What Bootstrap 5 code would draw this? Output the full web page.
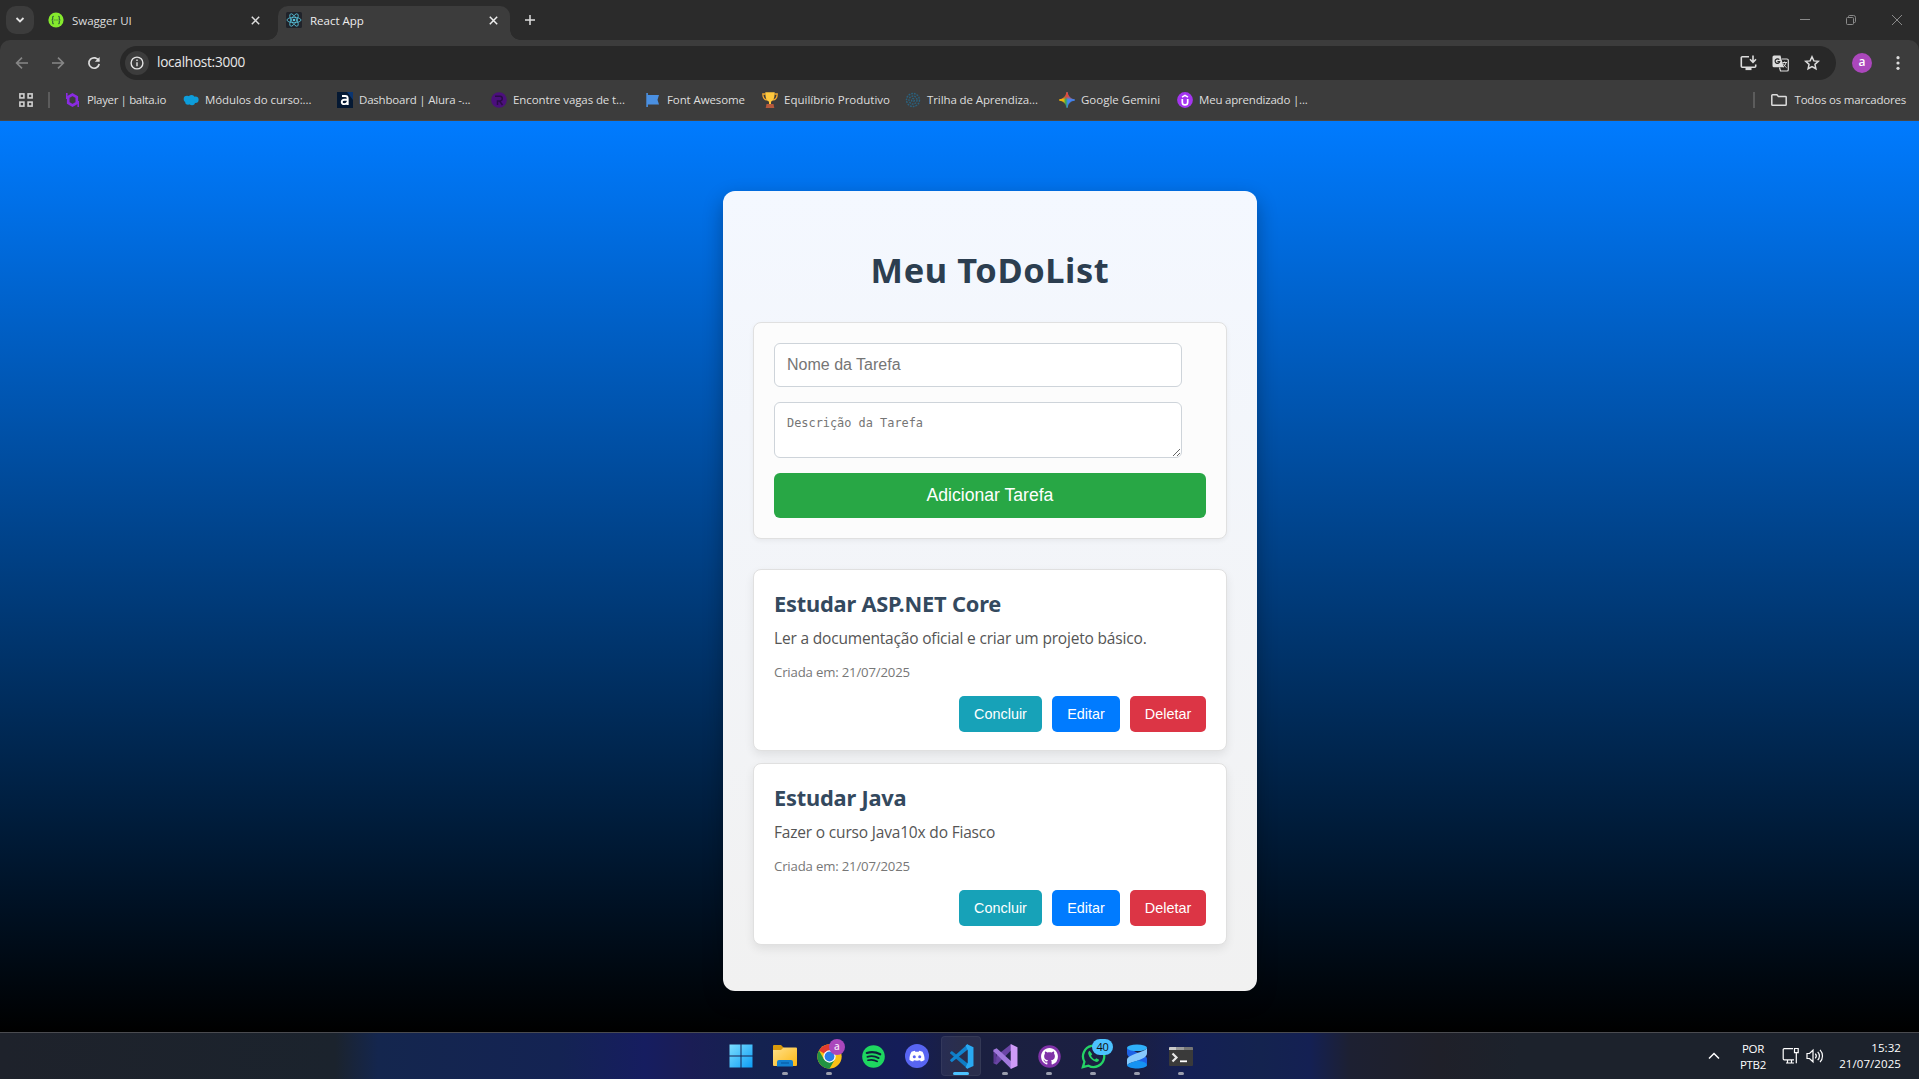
<!DOCTYPE html>
<html lang="pt-br">
<head>
<meta charset="utf-8">
<title>React App</title>
<link href="https://cdn.jsdelivr.net/npm/bootstrap@5.3.0/dist/css/bootstrap.min.css" rel="stylesheet">
<style>
body{font-family:"Open Sans",sans-serif;width:1919px;height:1079px;overflow:hidden;background:#000}
svg{display:block;flex:none}
.ui-text{font-size:11.5px;line-height:16px;white-space:nowrap;color:#dedede}
/* browser chrome */
.tabstrip{height:40px;background:#2b2b2b;padding-left:6px}
.tab-search{width:28px;height:28px;margin-top:6px;border-radius:10px;background:#3c3c3c}
.tab-item{height:34px;margin-top:6px;padding-bottom:6px}
.tab-item .ui-text{padding-top:1px}
.tab-idle{width:244px;padding-left:14px;padding-right:14px}
.tab-active{width:232px;background:#3c3c3c;border-radius:10px 10px 0 0;padding:0 8px 6px 8px;position:relative}
.tab-active .ui-text{color:#eee}
.tab-active::before,.tab-active::after{content:"";position:absolute;bottom:0;width:10px;height:10px}
.tab-active::before{left:-10px;background:radial-gradient(circle at 0 0,#2b2b2b 9.5px,#3c3c3c 10px)}
.tab-active::after{right:-10px;background:radial-gradient(circle at 100% 0,#2b2b2b 9.5px,#3c3c3c 10px)}
.tab-new{padding-left:15px}
.win-ctl{gap:36px;padding-right:17px}
.tool-wrap{background:#2b2b2b}
.toolbar{height:44px;background:#3c3c3c;border-radius:10px 10px 0 0;padding:2px 12px 0 13px}
.nav-ic{width:18px;margin-right:18px}
.omnibox{width:1716px;height:34px;border-radius:17px;background:#282828;padding:0 16px 0 5px;margin-left:-1px}
.info-dot{width:24px;height:24px;border-radius:50%;background:#3c3c3c;margin-right:8px}
.url{font-size:13.6px;letter-spacing:-.26px;color:#e8e8e8;padding-bottom:1px}
.omni-ic{gap:15px}
.avatar{width:20px;height:20px;border-radius:50%;background:#ab47bc;color:#fff;font-size:12px;line-height:18px;font-weight:600;margin-left:16px}
.bookmarks{height:37px;background:#3c3c3c;border-bottom:1px solid #4a4744;padding:0 13px 5px 19px}
.bm-sep{width:2px;height:16px;background:#5c5c5c}
.bm-sep-l{margin:0 15px}
.bm{width:154px;letter-spacing:-.1px}
.bm svg{margin-right:6px}
.bm-117{width:117px}.bm-118{width:118px}.bm-143{width:143px}
.ls-0{letter-spacing:0}.ls-2{letter-spacing:-.2px}.ls-3{letter-spacing:-.36px}
.folder-ic{margin:0 8px 0 16px}
/* page */
.page{height:911px;background:linear-gradient(#007bff,#000);padding:70px 0 0 723px}
.todo-app{width:534px;height:800px;border-radius:12px;background:linear-gradient(#f4f8ff,#f1f1f1);box-shadow:0 8px 20px rgba(0,0,0,.3);padding:55px 30px 0}
.todo-app h1{font-family:"Noto Sans","Open Sans",sans-serif;font-size:34.4px;line-height:48px;font-weight:700;color:#2c3e50;letter-spacing:.6px;margin:0 0 28px}
.form-box{height:217px;background:#fcfcfc;border:1px solid #e0e0e0;border-radius:8px;padding:20px;box-shadow:0 2px 5px rgba(0,0,0,.05);margin-bottom:30px}
.form-box .form-control{width:408px;border:1px solid #ced4da;border-radius:6px;padding:10px 12px;font-family:"Liberation Sans",sans-serif;font-size:16px;line-height:22px;color:#222}
.form-box .form-control::placeholder{color:#757575;opacity:1}
.form-box input.form-control{height:44px;margin-bottom:15px}
.form-box textarea.form-control{height:56px;min-height:0;font-family:"DejaVu Sans Mono",monospace;font-size:11.900px;line-height:18px;margin-bottom:15px;padding:11px 12px}
.todo-app .btn{font-family:"Liberation Sans",sans-serif;border:0;color:#fff;border-radius:5px;padding:1px 0 0;font-size:14.4px;height:36px}
.form-box .btn{height:45px;border-radius:6px;padding:0;font-size:17.6px;background:#28a745}
.task{height:182px;background:#fff;border:1px solid #e0e0e0;border-radius:8px;padding:19px 20px 0;box-shadow:0 4px 10px rgba(0,0,0,.08);margin-bottom:12px}
.task h3{font-family:"Noto Sans","Open Sans",sans-serif;font-size:21.8px;line-height:30px;font-weight:700;color:#34495e;letter-spacing:-.2px;margin:0}
.task-desc{font-size:15.5px;line-height:24px;letter-spacing:-.18px;color:#555;margin:7px 0 0}
.task-date{font-size:13.2px;line-height:20px;letter-spacing:-.18px;color:#777;margin:12px 0 14px}
.acts{gap:10px}
.todo-app .b-done{background:#17a2b8;width:83px}.todo-app .b-edit{background:#007bff;width:68px}.todo-app .b-del{background:#dc3545;width:76px}
/* taskbar */
.taskbar{height:47px;border-top:1px solid #4a4b50;background:linear-gradient(90deg,#1e222b 0,#1b232d 335px,#14264e 378px,#142353 560px,#161d60 645px,#1a1d55 690px,#142250 760px,#141d58 900px,#1b2040 960px,#1b1f42 1130px,#142055 1190px,#14234f 1260px,#142053 1310px,#1d2032 1350px,#1f2029 1440px,#1c222c 1520px,#1c222c)}
.apps{padding-left:719px}
.app-cell{width:44px;height:46px;position:relative}
.app-cell::after{content:"";position:absolute;left:19px;bottom:4px;width:6px;height:3px;border-radius:2px;background:#9a9dad}
.app-cell.off::after{display:none}
.app-cell.cur::before{content:"";position:absolute;inset:3px 2px;border-radius:4px;background:#fff1;border:1px solid #ffffff0d}
.app-cell.cur::after{left:14px;width:16px;background:#4cc2ff}
.app-cell svg{position:relative}
.dot-badge{position:absolute;z-index:2;left:22px;top:6px;width:16px;height:16px;border-radius:50%;background:#ab47bc;color:#f3dff6;font-size:10px;line-height:14px;text-align:center;font-weight:600}
.num-badge{position:absolute;z-index:2;left:21px;top:6px;width:21px;height:16px;border-radius:8px;background:#4cc2ff;color:#111;font-size:11px;line-height:16px;text-align:center;letter-spacing:-.3px}
.tray{padding-right:18px}
.tray .ui-text{color:#fff}
.lang{margin-left:19px;width:28px;letter-spacing:-.3px;padding-top:1px}
.net-ic{margin-left:15px}.vol-ic{margin-left:7px}
.clock{margin-left:13px;width:64px;letter-spacing:.08px}
</style>
<script src="https://cdn.jsdelivr.net/npm/bootstrap@5.3.0/dist/js/bootstrap.bundle.min.js"></script>
</head>
<body>
<header>
  <div class="tabstrip d-flex">
    <div class="tab-search d-flex align-items-center justify-content-center">
      <svg width="10" height="10" viewBox="0 0 10 10" fill="none" stroke="#e3e3e3" stroke-width="1.8"><path d="M1.5 3 5 6.5 8.500 3"/></svg>
    </div>
    <div class="tab-item tab-idle d-flex align-items-center">
      <svg class="me-2" width="16" height="16" viewBox="0 0 16 16"><circle cx="8" cy="8" r="7.600" fill="#85ea2d"/><path d="M5.800 4.300c-1.600 0-1 1.400-1.100 2.400-.1.800-.5 1.300-1.100 1.300.6 0 1 .5 1.100 1.300.1 1-.5 2.400 1.100 2.400M10.200 4.300c1.600 0 1 1.400 1.100 2.400.1.800.5 1.300 1.100 1.300-.6 0-1 .5-1.100 1.300-.1 1 .5 2.400-1.100 2.400" fill="none" stroke="#2f5d3a" stroke-width="1.100"/><path d="M5.700 8h.9M7.600 8h.9M9.500 8h.9" stroke="#2f5d3a" stroke-width="1.100"/></svg>
      <span class="ui-text flex-grow-1">Swagger UI</span>
      <svg class="me-1" width="9" height="9" viewBox="0 0 9 9" stroke="#dedede" stroke-width="1.500"><path d="m.8.800 7.400 7.400M8.200.800.8 8.200"/></svg>
    </div>
    <div class="tab-item tab-active d-flex align-items-center">
      <svg width="16" height="16" viewBox="0 0 16 16"><rect width="16" height="16" rx="1.500" fill="#20232a"/><g fill="none" stroke="#58c4dc" stroke-width=".8"><ellipse cx="8" cy="8" rx="7" ry="2.700"/><ellipse cx="8" cy="8" rx="7" ry="2.700" transform="rotate(60 8 8)"/><ellipse cx="8" cy="8" rx="7" ry="2.700" transform="rotate(120 8 8)"/></g><circle cx="8" cy="8" r="1.300" fill="#58c4dc"/></svg>
      <span class="ui-text flex-grow-1 ms-2">React App</span>
      <svg class="me-1" width="9" height="9" viewBox="0 0 9 9" stroke="#eee" stroke-width="1.500"><path d="m.8.800 7.400 7.400M8.200.800.8 8.200"/></svg>
    </div>
    <div class="tab-item tab-new d-flex align-items-center">
      <svg width="10" height="10" viewBox="0 0 10 10" stroke="#dedede" stroke-width="1.500"><path d="M5 0v10M0 5h10"/></svg>
    </div>
    <div class="win-ctl d-flex align-items-center ms-auto">
      <svg width="10" height="10" stroke="#8a8a8a"><path d="M0 4.500h10"/></svg>
      <svg width="10" height="10" viewBox="0 0 10 10" fill="none" stroke="#8a8a8a"><rect x=".5" y="2.500" width="7" height="7" rx="1"/><path d="M2.500 2V1.500a1 1 0 0 1 1-1h4a2 2 0 0 1 2 2v4a1 1 0 0 1-1 1H8"/></svg>
      <svg width="10" height="10" viewBox="0 0 10 10" stroke="#8a8a8a"><path d="m0 0 10 10M10 0 0 10"/></svg>
    </div>
  </div>
  <div class="tool-wrap">
    <div class="toolbar d-flex align-items-center">
      <svg class="nav-ic" height="16" viewBox="0 0 18 16" fill="none" stroke="#868686" stroke-width="1.600"><path d="M15 8H4M9 2.600 3.600 8 9 13.400"/></svg>
      <svg class="nav-ic" height="16" viewBox="0 0 18 16" fill="none" stroke="#868686" stroke-width="1.600"><path d="M3 8h11M9 2.600 14.400 8 9 13.400"/></svg>
      <svg class="nav-ic" height="16" viewBox="0 0 18 16" fill="none" stroke="#dcdcdc" stroke-width="1.700"><path d="M13.800 5.800A5.200 5.200 0 1 0 14.200 9"/><path d="M14.600 2v4.800H9.800z" fill="#dcdcdc" stroke="none"/></svg>
      <div class="omnibox d-flex align-items-center">
        <div class="info-dot d-flex align-items-center justify-content-center">
          <svg width="14" height="14" viewBox="0 0 14 14" fill="none" stroke="#e3e3e3" stroke-width="1.400"><circle cx="7" cy="7" r="5.900"/><path d="M7 6.200v4M7 3.600v1.500"/></svg>
        </div>
        <span class="url">localhost:3000</span>
        <div class="omni-ic d-flex align-items-center ms-auto">
          <svg width="17" height="16" viewBox="0 0 17 16" fill="none" stroke="#dcdcdc" stroke-width="1.600"><path d="M9 1.800H2.300a1 1 0 0 0-1 1v8.400a1 1 0 0 0 1 1h12.400a1 1 0 0 0 1-1V9.500"/><path d="M5.500 14h6" stroke-width="2.200"/><path d="M13 .5v6.300M10 4.300l3 3 3-3"/></svg>
          <svg width="17" height="17" viewBox="0 0 17 17"><path d="M2 .5h6.500l3.200 11.700H2a1.500 1.500 0 0 1-1.500-1.500V2A1.500 1.500 0 0 1 2 .5z" fill="#dcdcdc"/><path d="M10 4h5a1.300 1.300 0 0 1 1.300 1.300v9.400A1.300 1.300 0 0 1 15 16H8.500l-1-3.500" fill="none" stroke="#dcdcdc" stroke-width="1.200"/><path d="M7.300 4.700A2.300 2.300 0 1 0 7.700 6.700H5.400" fill="none" stroke="#282828" stroke-width="1.200"/><path d="M10.500 7.500h4.500M12.600 6.500v1M14 7.500c-.4 2-1.500 3.500-3 4.700M11.300 8.500c.6 1.700 1.700 3 3.300 4.200" fill="none" stroke="#dcdcdc"/></svg>
          <svg width="16" height="16" viewBox="0 0 16 16" fill="none" stroke="#dcdcdc" stroke-width="1.500"><path d="m8 1.800 1.850 4.100 4.450.45-3.350 3 .95 4.400L8 11.500l-3.900 2.250.95-4.400-3.350-3 4.450-.45z"/></svg>
        </div>
      </div>
      <div class="avatar text-center">a</div>
      <svg class="ms-auto" width="18" height="16" fill="#dcdcdc"><circle cx="9" cy="2.700" r="1.600"/><circle cx="9" cy="8" r="1.600"/><circle cx="9" cy="13.300" r="1.600"/></svg>
    </div>
  </div>
  <nav class="bookmarks d-flex align-items-center">
    <svg width="14" height="14" fill="none" stroke="#d0d0d0" stroke-width="1.600"><rect x=".9" y=".9" width="4" height="4"/><rect x="9.100" y=".9" width="4" height="4"/><rect x=".9" y="9.100" width="4" height="4"/><rect x="9.100" y="9.100" width="4" height="4"/></svg>
    <div class="bm-sep bm-sep-l"></div>
    <div class="ui-text bm bm-118 ls-3 d-flex"><svg width="16" height="16" viewBox="0 0 16 16" fill="none"><path d="M7.500 2.600 11.800 5v6l-4.300 2.400L3.200 11V5z" stroke="#8a2be2" stroke-width="2.600"/><path d="M1.800 1v6M13.200 9v6" stroke="#8a2be2" stroke-width="1.600"/></svg>Player | balta.io</div>
    <div class="ui-text bm d-flex"><svg width="16" height="16" viewBox="0 0 16 16"><g fill="#0d9ddb"><circle cx="4" cy="7" r="3.300"/><circle cx="8.500" cy="6" r="3"/><circle cx="12.300" cy="7.800" r="3.300"/><circle cx="5" cy="10" r="2.800"/><circle cx="9" cy="10.300" r="3"/></g></svg>Módulos do curso:...</div>
    <div class="ui-text bm ls-2 d-flex"><svg width="16" height="16" viewBox="0 0 16 16"><rect width="16" height="16" fill="#051933"/><path d="M10 0h6v8z" fill="#0b3570"/><path d="M5 4h3.300c1.600 0 2.400.8 2.400 2.400V13M10.500 7.800H7.300c-3.400 0-3.400 4.300 0 4.300 1.900 0 3.100-.9 3.200-2.300" fill="none" stroke="#fff" stroke-width="1.900"/></svg>Dashboard | Alura -...</div>
    <div class="ui-text bm d-flex"><svg width="16" height="16" viewBox="0 0 16 16"><circle cx="8" cy="8" r="7.800" fill="#4b0f7c"/><path d="M4 4.300h5a2.300 2.300 0 0 1 0 4.600H6.500V13M8.500 9l3 4" fill="none" stroke="#2a0b48" stroke-width="1.500"/></svg>Encontre vagas de t...</div>
    <div class="ui-text bm bm-117 d-flex"><svg width="16" height="16" viewBox="0 0 16 16" fill="#4a90e2"><path d="M1.300 1h1.600v14H1.300z"/><path d="M2 3h12l-1.500 4.700 1.500 4.800H2z"/></svg>Font Awesome</div>
    <div class="ui-text bm bm-143 ls-0 d-flex"><svg width="16" height="16" viewBox="0 0 16 16"><path d="M3.500 2H.8c0 4 1.500 5.500 4 6M12.500 2h2.700c0 4-1.500 5.500-4 6" fill="none" stroke="#f3a72f" stroke-width="1.300"/><path d="M3.300.3h9.400c0 5-1 8.700-3.700 9.300V12H7V9.600C4.300 9 3.300 5.300 3.300.3z" fill="#ffc83d"/><path d="M4.500 12h7l.8 4H3.700z" fill="#b5593c"/></svg>Equilíbrio Produtivo</div>
    <div class="ui-text bm d-flex"><svg width="16" height="16" viewBox="0 0 16 16" fill="none" stroke="#2a627f" stroke-width="1.400" stroke-dasharray="1.800 1"><circle cx="8" cy="8" r="6.500"/><circle cx="8" cy="8" r="4"/><circle cx="8" cy="8" r="1.500"/></svg>Trilha de Aprendiza...</div>
    <div class="ui-text bm bm-118 ls-0 d-flex"><svg width="16" height="16" viewBox="0 0 16 16"><defs><linearGradient id="gm" x1="0" y1=".5" x2="1" y2=".5"><stop offset="0" stop-color="#fbbc04"/><stop offset=".25" stop-color="#fbbc04"/><stop offset=".42" stop-color="#34a853"/><stop offset=".56" stop-color="#4285f4"/><stop offset="1" stop-color="#4285f4"/></linearGradient><linearGradient id="gm2" x1="0" y1="0" x2="0" y2="1"><stop offset=".25" stop-color="#ea4335"/><stop offset=".48" stop-color="#ea4335" stop-opacity="0"/></linearGradient></defs><path d="M8 .3C8.600 4.500 11.500 7.400 15.700 8 11.500 8.600 8.600 11.500 8 15.700 7.400 11.500 4.500 8.600.3 8 4.500 7.400 7.400 4.500 8 .3z" fill="url(#gm)" stroke="url(#gm)"/><path d="M8 .3C8.600 4.500 11.500 7.400 15.700 8 11.500 8.600 8.600 11.500 8 15.700 7.400 11.500 4.500 8.600.3 8 4.500 7.400 7.400 4.500 8 .3z" fill="url(#gm2)" stroke="url(#gm2)"/></svg>Google Gemini</div>
    <div class="ui-text bm ls-2 d-flex"><svg width="16" height="16" viewBox="0 0 16 16"><circle cx="8" cy="8" r="7.900" fill="#a435f0"/><path d="M5.300 7v3.200a2.700 2.700 0 0 0 5.400 0V7" fill="none" stroke="#fff" stroke-width="1.700"/><path d="m5 5.200 3-1.800 3 1.800" fill="none" stroke="#fff" stroke-width="1.400"/></svg>Meu aprendizado |...</div>
    <div class="d-flex align-items-center ms-auto">
      <div class="bm-sep"></div>
      <svg class="folder-ic" width="16" height="16" viewBox="0 0 16 16" fill="none" stroke="#dcdcdc" stroke-width="1.500"><path d="M.8 3.500a.8.800 0 0 1 .8-.8h4.300l1.500 1.700h7a.8.800 0 0 1 .8.800v7.300a.8.800 0 0 1-.8.800H1.600a.8.800 0 0 1-.8-.8z"/></svg>
      <span class="ui-text ls-2">Todos os marcadores</span>
    </div>
  </nav>
</header>

<main class="page">
  <div class="todo-app">
    <h1 class="text-center">Meu ToDoList</h1>
    <form class="form-box">
      <input class="form-control" placeholder="Nome da Tarefa">
      <textarea class="form-control" placeholder="Descrição da Tarefa"></textarea>
      <button type="button" class="btn w-100 d-block">Adicionar Tarefa</button>
    </form>
    <div class="task">
      <h3>Estudar ASP.NET Core</h3>
      <p class="task-desc">Ler a documentação oficial e criar um projeto básico.</p>
      <p class="task-date">Criada em: 21/07/2025</p>
      <div class="acts d-flex justify-content-end"><button class="btn b-done">Concluir</button><button class="btn b-edit">Editar</button><button class="btn b-del">Deletar</button></div>
    </div>
    <div class="task">
      <h3>Estudar Java</h3>
      <p class="task-desc">Fazer o curso Java10x do Fiasco</p>
      <p class="task-date">Criada em: 21/07/2025</p>
      <div class="acts d-flex justify-content-end"><button class="btn b-done">Concluir</button><button class="btn b-edit">Editar</button><button class="btn b-del">Deletar</button></div>
    </div>
  </div>
</main>

<footer class="taskbar d-flex">
  <div class="apps d-flex">
    <div class="app-cell off d-flex align-items-center justify-content-center"><svg width="24" height="24" viewBox="0 0 24 24"><defs><linearGradient id="wn" gradientUnits="userSpaceOnUse" x1="0" y1="0" x2="24" y2="24"><stop offset="0" stop-color="#7fe0ff"/><stop offset="1" stop-color="#0a9bf5"/></linearGradient></defs><path d="M.5.500h11v11H.5zM12.500.500h11v11h-11zM.5 12.500h11v11H.5zM12.500 12.500h11v11h-11z" fill="url(#wn)"/></svg></div>
    <div class="app-cell d-flex align-items-center justify-content-center"><svg width="26" height="24" viewBox="0 0 26 24"><defs><linearGradient id="fo" x1="0" y1="0" x2="1" y2="1"><stop offset="0" stop-color="#ffe08a"/><stop offset="1" stop-color="#fdb813"/></linearGradient></defs><path d="M1 2a1 1 0 0 1 1-1h7l3 3-2 3H1z" fill="#d99a0b"/><path d="M1 6h8l2.500-2.500H24a1 1 0 0 1 1 1V21a1 1 0 0 1-1 1H2a1 1 0 0 1-1-1z" fill="url(#fo)"/><path d="M5 22.500V18a2 2 0 0 1 2-2h12a2 2 0 0 1 2 2v4.500z" fill="#1380d0"/><path d="M9 19h8" stroke="#0a5ba5" stroke-width="1.200"/></svg></div>
    <div class="app-cell d-flex align-items-center justify-content-center"><svg width="25" height="25" viewBox="0 0 24 24"><circle cx="12" cy="12" r="11.700" fill="#fbc116"/><path d="M12 12 1.870 6.150A11.700 11.700 0 0 1 22.130 6.150L22.130 6.600z" fill="#e33b2e"/><path d="M1.870 6.150A11.700 11.700 0 0 0 12 23.700L17.200 14.700 12 12 6.800 14.800z" fill="#229342"/><circle cx="12" cy="12" r="5.900" fill="#fff"/><circle cx="12" cy="12" r="4.700" fill="#2a7de9"/></svg><span class="dot-badge">a</span></div>
    <div class="app-cell off d-flex align-items-center justify-content-center"><svg width="23" height="23" viewBox="0 0 24 24"><circle cx="12" cy="12" r="11.800" fill="#1ed760"/><g fill="none" stroke="#10203a" stroke-linecap="round"><path d="M5 8.300c4.500-1.400 9.700-1 14 1.400" stroke-width="2.300"/><path d="M5.600 12.300c4-1.200 8.200-.7 11.800 1.400" stroke-width="1.900"/><path d="M6.200 16c3.400-.9 6.800-.5 9.800 1.200" stroke-width="1.600"/></g></svg></div>
    <div class="app-cell off d-flex align-items-center justify-content-center"><svg width="24" height="24" viewBox="0 0 24 24"><circle cx="12" cy="12" r="12" fill="#5865f2"/><path d="M9.800 6.800c-1.300.2-2.300.5-3.300 1C5 10.300 4.300 13 4.500 15.900c1.100.9 2.300 1.400 3.600 1.700l.9-1.400c2 .6 4 .6 6 0l.9 1.400c1.300-.3 2.500-.8 3.600-1.700.2-2.900-.5-5.600-2-8.100-1-.5-2-.8-3.300-1l-.5 1c-1.100-.2-2.300-.2-3.400 0z" fill="#fff"/><circle cx="9.300" cy="12.800" r="1.500" fill="#5865f2"/><circle cx="14.700" cy="12.800" r="1.500" fill="#5865f2"/></svg></div>
    <div class="app-cell cur d-flex align-items-center justify-content-center"><svg width="25" height="25" viewBox="0 0 24 24"><path d="M1 8.200 2.700 6.600 18 18.800V24L1.200 9z" fill="#0f7cc4"/><path d="M1 15.800 2.700 17.400 18 5.200V0L1.200 15z" fill="#1284cf"/><path d="M17.500.2 23.500 3v18l-6 2.800L16 22.500 18 17.800V6.200L16 1.500z" fill="#29a9f2"/></svg></div>
    <div class="app-cell d-flex align-items-center justify-content-center"><svg width="25" height="25" viewBox="0 0 24 24"><path d="M.5 18.500 3.500 20 17.500 6V0L3.500 11z" fill="#6a45a5"/><path d="M.5 5.500 3.200 7v10L.5 18.500z" fill="#5b3a93"/><path d="m3.500 4 14 12.500V24L.5 7V5.500z" fill="#a179dc"/><path d="M17 0l6.500 3v18L17 24z" fill="#cf9bf7"/></svg></div>
    <div class="app-cell d-flex align-items-center justify-content-center"><svg width="23" height="23" viewBox="0 0 24 24"><circle cx="12" cy="12" r="11.700" fill="#8032a8"/><path transform="translate(3.200 3.200) scale(1.100)" d="M8 0C3.580 0 0 3.580 0 8c0 3.540 2.290 6.530 5.470 7.590.4.070.55-.17.55-.38 0-.19-.01-.82-.01-1.490-2.010.37-2.530-.49-2.690-.94-.09-.23-.48-.94-.82-1.130-.28-.15-.68-.52-.01-.53.63-.01 1.080.58 1.230.82.72 1.210 1.870.87 2.330.66.07-.52.28-.87.51-1.070-1.780-.2-3.640-.89-3.640-3.950 0-.87.31-1.590.82-2.150-.08-.2-.36-1.020.08-2.120 0 0 .67-.21 2.200.82.640-.18 1.320-.27 2-.27s1.360.09 2 .27c1.530-1.040 2.200-.82 2.200-.82.44 1.100.16 1.920.08 2.120.51.56.82 1.270.82 2.150 0 3.070-1.870 3.750-3.650 3.950.29.25.54.73.54 1.480 0 1.070-.01 1.930-.01 2.200 0 .21.15.46.55.38A8.010 8.010 0 0 0 16 8c0-4.420-3.580-8-8-8z" fill="#fff"/></svg></div>
    <div class="app-cell d-flex align-items-center justify-content-center"><svg width="25" height="25" viewBox="0 0 24 24"><path d="M1.800 22.200 3.300 17A10.200 10.200 0 1 1 7.200 20.800z" fill="none" stroke="#25d366" stroke-width="2.200"/><path d="M8.300 6.500c-1 .5-1.700 1.700-1.300 3.200 1 3.700 3.500 6.300 7.200 7.400 1.700.4 3-.6 3.200-2l-2.700-1.500-1.300 1.300c-1.800-.8-3-2-3.800-3.700l1.200-1.400z" fill="#25d366"/></svg><span class="num-badge">40</span></div>
    <div class="app-cell d-flex align-items-center justify-content-center"><svg width="22" height="25" viewBox="0 0 22 25"><path d="M1 3.500V9c0 3.500 3 5 8 6l12 6v-6c0-2.500-3-4-8-5.500z" fill="#1d62e6"/><path d="M21 3.500V9c0 4-4 5.500-9 7.500S2 19 1 21.500V16c0-3 4-4.500 9-6.500s10-3 11-6z" fill="#86c9fc"/><path d="M1 21.500C2 19 7 18 12 16.500c3 .8 9 1.500 9 5C19 25.500 3 25.500 1 21.500z" fill="#1693f2"/><ellipse cx="11" cy="3.800" rx="10" ry="3.300" fill="#2fb0fa"/></svg></div>
    <div class="app-cell d-flex align-items-center justify-content-center"><svg width="24" height="19" viewBox="0 0 24 19"><rect width="24" height="19" rx="1" fill="#3a3a3a"/><path d="M0 3V1a1 1 0 0 1 1-1h6v3z" fill="#c9c9c9"/><path d="M7 0h8v3H7z" fill="#9a9a9a"/><path d="M15 0h8a1 1 0 0 1 1 1v2h-9z" fill="#757575"/><path d="m3.500 6.500 4 4-4 4" fill="none" stroke="#e8e8e8" stroke-width="2.200"/><path d="M11 14.300h7" stroke="#fff" stroke-width="1.800"/></svg></div>
  </div>
  <div class="tray d-flex align-items-center ms-auto">
    <svg width="12" height="8" viewBox="0 0 12 8" fill="none" stroke="#fff" stroke-width="1.500"><path d="m1 6.500 5-5 5 5"/></svg>
    <div class="lang ui-text text-center">POR<br>PTB2</div>
    <svg class="net-ic" width="17" height="18" viewBox="0 0 17 18" fill="none" stroke="#fff" stroke-width="1.200"><path d="M11 1.600H2.200a1 1 0 0 0-1 1v9.200a1 1 0 0 0 1 1H12M4 16h8M5.500 13v3M9.500 13v3"/><path d="M12.500 1.500h3.700v4.200h-3.700zM14.300 5.700v10.500"/></svg>
    <svg class="vol-ic" width="18" height="16" viewBox="0 0 18 16" fill="none" stroke="#fff" stroke-width="1.200"><path d="M1 5.500h2.500L7 2.200v11.600l-3.500-3.300H1z"/><path d="M9.300 5.700a3.500 3.500 0 0 1 0 4.600M11.700 3.800a6 6 0 0 1 0 8.400M14 1.800a9 9 0 0 1 0 12.400"/></svg>
    <div class="clock ui-text text-end">15:32<br>21/07/2025</div>
  </div>
</footer>
</body>
</html>
